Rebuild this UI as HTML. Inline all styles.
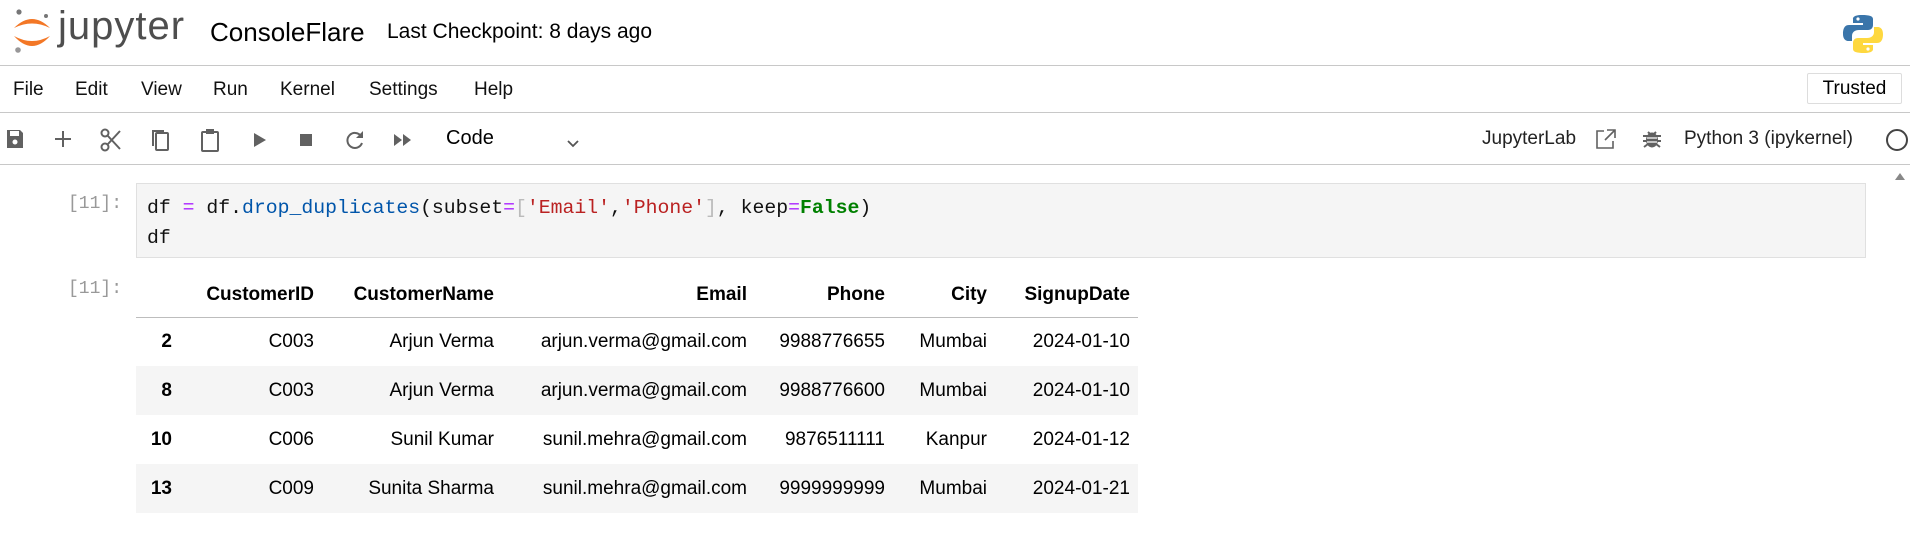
<!DOCTYPE html>
<html><head><meta charset="utf-8">
<style>
*{margin:0;padding:0;box-sizing:border-box}
body{width:1910px;height:554px;background:#fff;font-family:"Liberation Sans",sans-serif;color:#000;position:relative;overflow:hidden}
.abs{position:absolute;white-space:nowrap}
.hline{position:absolute;left:0;width:1910px;height:1px;background:#c8c8c8}
.menu{top:79px;font-size:19px;color:#111}
.code{font-family:"Liberation Mono",monospace;font-size:19.8px;color:#111}
.prompt{font-family:"Liberation Mono",monospace;font-size:18px;color:#999}
table{position:absolute;left:136px;top:274px;border-collapse:collapse;font-size:19px;table-layout:fixed}
td,th{text-align:right;padding:0 8px 0 0;height:49px;white-space:nowrap}
th{font-weight:bold}
thead tr{border-bottom:1.5px solid #bdbdbd;height:43px}
thead th{height:43px}
tbody tr:nth-child(even){background:#f5f5f5}
tbody th{font-weight:bold}
.ic{position:absolute;top:128px}
</style></head><body>
<!-- header -->
<svg class="abs" style="left:10px;top:8px" width="46" height="48" viewBox="0 0 46 48">
<circle cx="9" cy="4" r="2.6" fill="#767677"/>
<circle cx="36" cy="8" r="2" fill="#767677"/>
<circle cx="8" cy="42" r="2.8" fill="#989798"/>
<path d="M4 20 Q22 2 40 20 Q22 11 4 20Z" fill="#f37726"/>
<path d="M4 28 Q22 48 40 28 Q22 38 4 28Z" fill="#f37726"/>
</svg>
<div class="abs" style="left:58px;top:4px;font-size:40px;color:#4e4e4e;letter-spacing:1px">jupyter</div>
<div class="abs" style="left:210px;top:17px;font-size:26px">ConsoleFlare</div>
<div class="abs" style="left:387px;top:20px;font-size:21px">Last Checkpoint: 8 days ago</div>
<svg class="abs" style="left:1842px;top:14px" width="42" height="40" viewBox="0 0 42 40">
<path d="M20 1 C10 1 11 5 11 5 V9 H21 V11 H7 C1 11 1 18 1 20 C1 27 6 27 6 27 H10 V22 C10 18 13 16 17 16 H26 C29 16 31 14 31 11 V5 C31 2 27 1 20 1Z" fill="#3a75aa"/>
<circle cx="16" cy="5" r="1.6" fill="#fff"/>
<path d="M22 39 C32 39 31 35 31 35 V31 H21 V29 H35 C41 29 41 22 41 20 C41 13 36 13 36 13 H32 V18 C32 22 29 24 25 24 H16 C13 24 11 26 11 29 V35 C11 38 15 39 22 39Z" fill="#fed83f"/>
<circle cx="26" cy="35" r="1.6" fill="#fff"/>
</svg>
<div class="hline" style="top:65px"></div>
<!-- menu -->
<div class="abs menu" style="left:13px">File</div>
<div class="abs menu" style="left:75px">Edit</div>
<div class="abs menu" style="left:141px">View</div>
<div class="abs menu" style="left:213px">Run</div>
<div class="abs menu" style="left:280px">Kernel</div>
<div class="abs menu" style="left:369px">Settings</div>
<div class="abs menu" style="left:474px">Help</div>
<div class="abs" style="left:1807px;top:73px;width:95px;height:31px;border:1px solid #ddd;border-radius:2px;font-size:19px;text-align:center;line-height:29px">Trusted</div>
<div class="hline" style="top:112px"></div>
<!-- toolbar -->
<svg class="ic" style="left:5px" width="20" height="22" viewBox="0 0 20 22"><path d="M2 2H15L18 5V20H2Z" fill="#616161"/><rect x="5" y="3" width="9" height="5" fill="#fff"/><circle cx="10" cy="14" r="2.5" fill="#fff"/></svg>
<svg class="ic" style="left:53px" width="20" height="22" viewBox="0 0 20 22"><path d="M10 3V19M2 11H18" stroke="#616161" stroke-width="2"/></svg>
<svg class="ic" style="left:99px" width="24" height="24" viewBox="0 0 24 24"><circle cx="6" cy="5" r="3.5" fill="none" stroke="#616161" stroke-width="2"/><circle cx="6" cy="19" r="3.5" fill="none" stroke="#616161" stroke-width="2"/><path d="M8.5 7.5L21 21M8.5 16.5L21 3" stroke="#616161" stroke-width="2"/></svg>
<svg class="ic" style="left:149px" width="24" height="24" viewBox="0 0 24 24"><rect x="7" y="5" width="12" height="17" rx="1" fill="none" stroke="#616161" stroke-width="2"/><path d="M4 18V3H15" fill="none" stroke="#616161" stroke-width="2"/></svg>
<svg class="ic" style="left:198px" width="24" height="24" viewBox="0 0 24 24"><rect x="4" y="4" width="16" height="19" rx="1" fill="none" stroke="#616161" stroke-width="2"/><rect x="8" y="1" width="8" height="5" fill="#616161"/></svg>
<svg class="ic" style="left:251px" width="18" height="24" viewBox="0 0 18 24"><path d="M3 5L15 12L3 19Z" fill="#616161"/></svg>
<svg class="ic" style="left:297px" width="18" height="24" viewBox="0 0 18 24"><rect x="3" y="6" width="12" height="12" fill="#616161"/></svg>
<svg class="ic" style="left:343px" width="24" height="24" viewBox="0 0 24 24"><path d="M18 8A7.5 7.5 0 1 0 19 15" fill="none" stroke="#616161" stroke-width="2"/><path d="M20 3V10H13Z" fill="#616161"/></svg>
<svg class="ic" style="left:391px" width="24" height="24" viewBox="0 0 24 24"><path d="M3 6L11 12L3 18ZM12 6L20 12L12 18Z" fill="#616161"/></svg>
<div class="abs" style="left:446px;top:127px;font-size:20px">Code</div>
<svg class="abs" style="left:565px;top:138px" width="16" height="12" viewBox="0 0 16 12"><path d="M3 3L8 8L13 3" fill="none" stroke="#555" stroke-width="1.8"/></svg>
<div class="abs" style="left:1482px;top:128px;font-size:19px;color:#222">JupyterLab</div>
<svg class="abs" style="left:1594px;top:127px" width="24" height="24" viewBox="0 0 24 24"><path d="M10 4H3V21H19V14" fill="none" stroke="#616161" stroke-width="1.6"/><path d="M13 3H21V11M21 3L11 13" fill="none" stroke="#616161" stroke-width="1.6"/></svg>
<svg class="abs" style="left:1641px;top:128px" width="22" height="22" viewBox="0 0 22 22"><ellipse cx="11" cy="12" rx="6" ry="7.5" fill="#616161"/><path d="M2 8H20M2 13H20M3 19L7 16M19 19L15 16M7 4L9 6M15 4L13 6" stroke="#616161" stroke-width="2"/><path d="M6 10H16M6 14H16" stroke="#fff" stroke-width="1.3"/></svg>
<div class="abs" style="left:1684px;top:128px;font-size:19px;color:#222">Python 3 (ipykernel)</div>
<div class="abs" style="left:1886px;top:129px;width:22px;height:22px;border:2px solid #444;border-radius:50%"></div>
<div class="hline" style="top:164px"></div>
<svg class="abs" style="left:1894px;top:171px" width="12" height="10" viewBox="0 0 12 10"><path d="M1 9L6 2L11 9Z" fill="#888"/></svg>
<!-- code cell -->
<div class="abs prompt" style="left:68px;top:194px">[11]:</div>
<div class="abs" style="left:136px;top:183px;width:1730px;height:75px;background:#f5f5f5;border:1px solid #e0e0e0"></div>
<div class="abs code" style="left:147px;top:193px;line-height:30px">df <span style="color:#a2f">=</span> df<span>.</span><span style="color:#0055aa">drop_duplicates</span>(subset<span style="color:#a2f">=</span><span style="color:#bbb">[</span><span style="color:#ba2121">'Email'</span>,<span style="color:#ba2121">'Phone'</span><span style="color:#bbb">]</span>, keep<span style="color:#a2f">=</span><span style="color:#008000;font-weight:bold">False</span>)<br>df</div>
<div class="abs prompt" style="left:68px;top:279px">[11]:</div>
<table>
<colgroup><col style="width:44px"><col style="width:142px"><col style="width:180px"><col style="width:253px"><col style="width:138px"><col style="width:102px"><col style="width:143px"></colgroup>
<thead><tr><th></th><th>CustomerID</th><th>CustomerName</th><th>Email</th><th>Phone</th><th>City</th><th>SignupDate</th></tr></thead>
<tbody>
<tr><th>2</th><td>C003</td><td>Arjun Verma</td><td>arjun.verma@gmail.com</td><td>9988776655</td><td>Mumbai</td><td>2024-01-10</td></tr>
<tr><th>8</th><td>C003</td><td>Arjun Verma</td><td>arjun.verma@gmail.com</td><td>9988776600</td><td>Mumbai</td><td>2024-01-10</td></tr>
<tr><th>10</th><td>C006</td><td>Sunil Kumar</td><td>sunil.mehra@gmail.com</td><td>9876511111</td><td>Kanpur</td><td>2024-01-12</td></tr>
<tr><th>13</th><td>C009</td><td>Sunita Sharma</td><td>sunil.mehra@gmail.com</td><td>9999999999</td><td>Mumbai</td><td>2024-01-21</td></tr>
</tbody></table>
</body></html>
